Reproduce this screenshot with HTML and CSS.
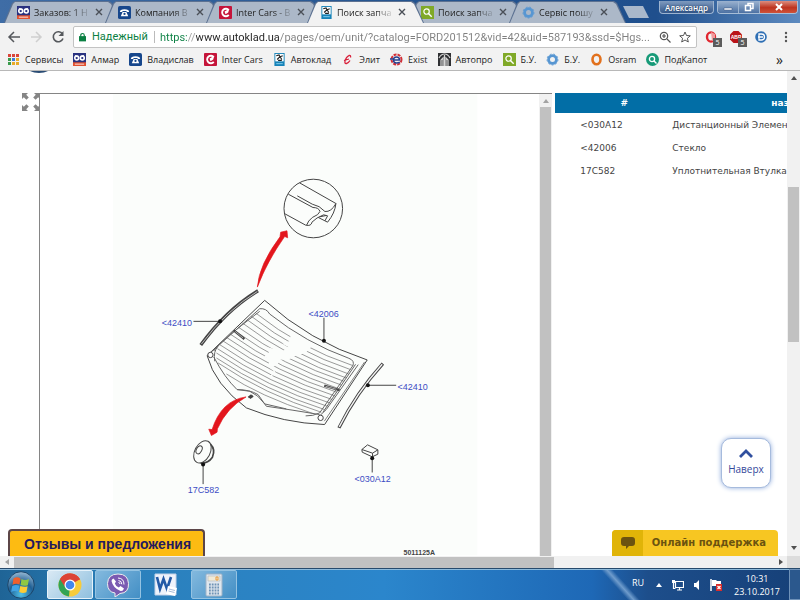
FILE: index.html
```html
<!DOCTYPE html>
<html lang="ru">
<head>
<meta charset="utf-8">
<title>Поиск запчастей</title>
<link rel="stylesheet" href="styles.css">
</head>
<body>
<svg class="defs" aria-hidden="true">
  <symbol id="i-oo" viewBox="0 0 14 14"><path fill="#29317f" d="M0 0h14v14H0z"/><path fill="#e2512f" d="M0 10h14v4H0z"/><g fill="none" stroke="#fff" stroke-width="1.7"><circle cx="4" cy="5.5" r="2.1"/><circle cx="10" cy="5.5" r="2.1"/></g><path stroke="#fff" d="M2 2.5l4 1M12 2.500l-4 1M2 12h10" stroke-width=".9"/></symbol>
  <symbol id="i-phone" viewBox="0 0 14 14"><rect width="14" height="14" rx="2" fill="#17478c"/><path d="M2 6.500q0-3 5-3t5 3H9.500L9 5.500H5L4.500 6.500z" fill="#fff"/><path d="M5 6.500h4l2 4.500H3z" fill="#fff"/><circle cx="7" cy="8.600" r="1.200" fill="#17478c"/></symbol>
  <symbol id="i-ic" viewBox="0 0 14 14"><rect width="14" height="14" rx="1" fill="#c5143a"/><path d="M10.500 4.500A4 4 0 1 0 10.500 9.500" fill="none" stroke="#fff" stroke-width="2"/><path d="M6 6l5-3-1 4-3 2z" fill="#fff"/></symbol>
  <symbol id="i-ak" viewBox="0 0 11 14"><path fill="#1683b8" d="M0 0h11v14H0z"/><path fill="#fff" d="M1 1h9v8H1z"/><path d="M2 3l3-1 1 2 3-1M3 7l3-3 2 3M4 8h4" stroke="#222" stroke-width="1.200" fill="none"/><path d="M2 11.500h7" stroke="#8cd0ee"/></symbol>
  <symbol id="i-search" viewBox="0 0 14 14"><path fill="#80a928" d="M0 0h14v14H0z"/><circle cx="6" cy="6" r="2.900" fill="none" stroke="#fff" stroke-width="1.300"/><path d="M8 8l3.500 3.500" stroke="#fff" stroke-width="1.500"/></symbol>
  <symbol id="i-gear" viewBox="0 0 14 14"><circle cx="7" cy="7" r="4.200" fill="none" stroke="#5796d2" stroke-width="3"/><circle cx="7" cy="7" r="5.900" fill="none" stroke="#5796d2" stroke-width="1" stroke-dasharray="2 2"/></symbol>
  <symbol id="i-x" viewBox="0 0 8 8"><path d="M1 1l6 6M7 1L1 7" stroke="#4a4f57" stroke-width="1.400"/></symbol>
</svg>

<header class="chrome">
  <div class="tabstrip">
    <nav class="tabs" aria-label="Вкладки">
      <div class="tab"><svg class="fav"><use href="#i-oo"/></svg><a href="#">Заказов: 1 Н</a><button aria-label="Закрыть"><svg><use href="#i-x"/></svg></button></div>
      <div class="tab"><svg class="fav"><use href="#i-phone"/></svg><a href="#">Компания В</a><button aria-label="Закрыть"><svg><use href="#i-x"/></svg></button></div>
      <div class="tab"><svg class="fav"><use href="#i-ic"/></svg><a href="#">Inter Cars - В</a><button aria-label="Закрыть"><svg><use href="#i-x"/></svg></button></div>
      <div class="tab active"><svg class="fav"><use href="#i-ak"/></svg><a href="#">Поиск запча</a><button aria-label="Закрыть"><svg><use href="#i-x"/></svg></button></div>
      <div class="tab"><svg class="fav"><use href="#i-search"/></svg><a href="#">Поиск запча</a><button aria-label="Закрыть"><svg><use href="#i-x"/></svg></button></div>
      <div class="tab"><svg class="fav"><use href="#i-gear"/></svg><a href="#">Сервіс пошу</a><button aria-label="Закрыть"><svg><use href="#i-x"/></svg></button></div>
    </nav>
    <button class="newtab" aria-label="Новая вкладка"></button>
    <div class="wincontrols">
      <button class="user">Александр</button>
      <div class="wingroup">
        <button aria-label="Свернуть"><svg viewBox="0 0 20 12"><path d="M6 7h8v2H6z" fill="#fff" stroke="#35527c" stroke-width=".5"/></svg></button>
        <button aria-label="Развернуть"><svg viewBox="0 0 20 12"><path d="M9 4V2.500h5v5h-2M6.500 4.500h5v5h-5z" fill="none" stroke="#fff" stroke-width="1.500"/></svg></button>
        <button class="close" aria-label="Закрыть окно"><svg viewBox="0 0 20 12"><path d="M7 3l6 6M13 3L7 9" stroke="#fff" stroke-width="2"/></svg></button>
      </div>
    </div>
  </div>

  <div class="toolbar">
    <button aria-label="Назад"><svg viewBox="0 0 14 14"><path d="M13 7H2M7 2L2 7l5 5" fill="none" stroke="#55585c" stroke-width="1.500"/></svg></button>
    <button aria-label="Вперёд"><svg viewBox="0 0 14 14"><path d="M2 7h10M7 2l5 5-5 5" fill="none" stroke="#cfcfcf" stroke-width="1.500"/></svg></button>
    <button aria-label="Обновить"><svg viewBox="0 0 14 14"><path d="M11.500 4A5 5 0 1 0 12 8.500" fill="none" stroke="#55585c" stroke-width="1.600"/><path d="M12.500 1v5h-5z" fill="#55585c"/></svg></button>
    <div class="omnibox">
      <svg class="lock" viewBox="0 0 8 10"><path d="M0 4h8v6H0z" fill="#0b8043"/><path d="M2 5V3a2 2 0 0 1 4 0v2" fill="none" stroke="#0b8043" stroke-width="1.300"/></svg>
      <span class="secure">Надежный</span>
      <input class="url" type="text" aria-label="Адрес" value="https://www.autoklad.ua/pages/oem/unit/?catalog=FORD201512&amp;vid=42&amp;uid=587193&amp;ssd=$Hgs...">
      <svg class="obi" viewBox="0 0 12 12"><circle cx="5" cy="5" r="3.700" fill="none" stroke="#555" stroke-width="1.200"/><path d="M8 8l3.500 3.500M3 5h4M5 3v4" stroke="#555" stroke-width="1.200"/></svg>
      <svg class="obi" viewBox="0 0 12 12"><path d="M6 1l1.500 3.500 3.800.3-2.900 2.500.9 3.700L6 9l-3.300 2 .9-3.700L.7 4.800l3.800-.3z" fill="none" stroke="#555"/></svg>
    </div>
    <div class="extensions">
      <button class="ext" aria-label="Opera"><svg viewBox="0 0 12 12"><ellipse cx="6" cy="6" rx="4" ry="4.600" fill="none" stroke="#e0262f" stroke-width="2.400"/><path d="M6 1l4 2v6l-3 1z" fill="#f19a9c"/></svg><span class="badge">5</span></button>
      <button class="ext" aria-label="AdBlock"><svg viewBox="0 0 12 12"><path d="M3.500 0h5L12 3.500v5L8.500 12h-5L0 8.500v-5z" fill="#ba1419"/><text x="6" y="8" text-anchor="middle" class="abp">ABP</text></svg><span class="badge">5</span></button>
      <button class="ext" aria-label="Перевод"><svg viewBox="0 0 12 12"><circle cx="6" cy="6" r="5.800" fill="#2f6fb4"/><path d="M4 3h2.500a3 3 0 0 1 0 6H4zM3 6h5" fill="none" stroke="#fff" stroke-width="1.300"/></svg></button>
      <button class="ext" aria-label="Меню"><svg viewBox="0 0 12 12"><g fill="#555"><circle cx="6" cy="2" r="1.200"/><circle cx="6" cy="6" r="1.200"/><circle cx="6" cy="10" r="1.200"/></g></svg></button>
    </div>
  </div>

  <nav class="bookmarks" aria-label="Закладки">
    <a href="#"><svg viewBox="0 0 13 13"><g><path fill="#d9453a" d="M1 1h3v3H1zM5 1h3v3H5zM9 1h3v3H9z"/><path fill="#3a9b4c" d="M1 5h3v3H1z"/><path fill="#3c7bd6" d="M5 5h3v3H5z"/><path fill="#e7ab28" d="M9 5h3v3H9zM5 9h3v3H5zM9 9h3v3H9z"/><path fill="#3a9b4c" d="M1 9h3v3H1z"/><path d="M4.500 1v11M8.500 1v11M1 4.500h11M1 8.500h11" stroke="#f2f2f2"/></g></svg>Сервисы</a>
    <a href="#"><svg><use href="#i-oo"/></svg>Алмар</a>
    <a href="#"><svg><use href="#i-phone"/></svg>Владислав</a>
    <a href="#"><svg><use href="#i-ic"/></svg>Inter Cars</a>
    <a href="#"><svg><use href="#i-ak"/></svg>Автоклад</a>
    <a href="#"><svg viewBox="0 0 13 13"><path d="M9.500 4.500Q10 2 8 2.500 5 4 4 8q-.5 3 1.500 2.500Q7.500 10 9 7.500M3 7.500l5-1.500" fill="none" stroke="#d8203a" stroke-width="1.300"/></svg>Элит</a>
    <a href="#"><svg viewBox="0 0 13 13"><circle cx="6.500" cy="6.500" r="5" fill="none" stroke="#d32f36" stroke-width="2" stroke-dasharray="3 1"/><path d="M4 7h5.500q0-3-3-3t-3 3 3 3 3-1.200M0 6h4" fill="none" stroke="#27408f" stroke-width="1.500"/></svg>Exist</a>
    <a href="#"><svg viewBox="0 0 13 13"><path fill="#2f3033" d="M0 0h13v13H0z"/><path d="M1 5q2-4 5.500-4T12 5M3 13V7l2-2v8M10 13V7L8 5v8M6.500 2v11" fill="none" stroke="#d5d5d5" stroke-width="1.200"/></svg>Автопро</a>
    <a href="#"><svg><use href="#i-search"/></svg>Б.У.</a>
    <a href="#"><svg><use href="#i-gear"/></svg>Б.У.</a>
    <a href="#"><svg viewBox="0 0 13 13"><ellipse cx="6.500" cy="6.500" rx="4" ry="4.700" fill="none" stroke="#e2711d" stroke-width="2.600"/></svg>Osram</a>
    <a href="#"><svg viewBox="0 0 13 13"><circle cx="6.500" cy="6.500" r="6.500" fill="#179a78"/><circle cx="6" cy="6" r="2.600" fill="none" stroke="#fff" stroke-width="1.300"/><path d="M8 8l2.500 2.500" stroke="#fff" stroke-width="1.400"/></svg>ПодКапот</a>
    <button class="more" aria-label="Другие закладки">»</button>
  </nav>
</header>

<div class="window">
  <main class="page">
    <div class="sitehead"><span class="logo"></span></div>
    <div class="content">
      <button class="expand" aria-label="Развернуть схему"><svg viewBox="0 0 18 18"><g fill="#858585"><path id="ar" d="M0 0h6L4.200 1.800 6.800 4.400 4.400 6.800 1.800 4.200 0 6z"/><use href="#ar" transform="matrix(-1 0 0 1 18 0)"/><use href="#ar" transform="matrix(1 0 0 -1 0 18)"/><use href="#ar" transform="matrix(-1 0 0 -1 18 18)"/></g></svg></button>
      <section class="scheme">
        <svg class="drawing" viewBox="40 94 500 462" preserveAspectRatio="xMinYMin meet" role="img" aria-label="Схема: заднее стекло">
          <path d="M113 94h365v462H113z" fill="#fbfdfb"/>
          <g transform="translate(180 165) scale(.33333)" fill="none" stroke="#444" stroke-width="3">
            <circle cx="401" cy="131" r="88"/>
            <path d="M360 54L469 116Q466 145 444 172L416 158M326 88L400 128Q418 128 421 140 418 150 398 158 385 168 381 181M314 146L378 181Q395 185 397 172 410 158 432 150M353 93L398 118Q420 122 436 140 455 142 469 116M432 150L444 153 436 168M420 156L440 152"/>
            <path d="M233 367Q238 300 301 216L303 202 322 198 324 219 315 215Q262 290 233 367z" fill="#e3161d" stroke="#e3161d" stroke-width="2"/>
          </g>
          <g transform="translate(150 280) scale(.33333)" fill="none" stroke="#444" stroke-width="3">
            <path d="M153 196Q230 90 325 33" stroke-width="10"/>
            <path d="M155 193Q231 91 323 35" stroke="#bbb" stroke-width="3"/>
            <path d="M568 445Q620 340 700 252" stroke-width="10"/>
            <path d="M569 442Q621 340 698 254" stroke="#f4f4f4" stroke-width="4"/>
            <path d="M345 62Q480 185 653 241L525 435Q400 430 290 385Q195 315 172 228z" stroke-width="3"/>
            <path d="M645 247L524 425" stroke-width="2"/>
            <path d="M176 225L330 87Q350 85 360 103Q470 190 598 236Q616 243 610 258L510 400Q490 410 468 409M192 214Q205 190 330 95M195 245Q190 215 205 200M192 232Q225 295 262 330 300 330 325 345L350 380 430 392 510 405M626 255L530 390 512 407M618 254L520 398M262 330L300 335Q325 345 345 373L410 388" stroke="#666"/>
            <g stroke="#666" stroke-width="2">
              <path d="M318 100Q450 205 610 258M305 110Q440 216 603 270M292 120Q430 227 597 283M278 130Q420 238 590 295M265 142Q410 248 583 305M253 152Q401 259 577 317M241 163Q391 270 570 328M230 173Q382 280 562 338M220 184Q374 291 556 349M210 195Q365 302 548 360M203 207Q357 312 540 370M200 220Q352 323 533 380M200 235Q348 334 525 390M205 250Q346 345 515 398M230 283Q330 350 490 402"/>
            </g>
            <path d="M424 160L490 196 468 220 438 228 420 238 392 240 385 252 370 262 378 280 358 296 372 274 352 258 362 245 344 230 358 218 350 202 400 214 416 202 398 192 420 184z" fill="#fbfdfb" stroke="none"/>
            <path d="M252 152L284 178M524 318L570 332" stroke-width="7"/>
            <path d="M256 155L280 175M528 320L560 329" stroke="#ddd" stroke-width="2"/>
            <circle cx="182" cy="226" r="8" fill="#fff"/><circle cx="513" cy="415" r="8" fill="#fff"/>
            <path d="M296 354L306 346M300 356L310 349" stroke-width="6"/>
            <path d="M131 125H210M523 114V182M655 317H740"/>
            <g fill="#111" stroke="none"><circle cx="211" cy="125" r="6"/><circle cx="523" cy="183" r="6"/><circle cx="655" cy="317" r="6"/></g>
            <path d="M289 352Q230 385 203 448L202 458 185 468 177 449 187 450Q215 362 289 352z" fill="#e3161d" stroke="#e3161d" stroke-width="2"/>
          </g>
          <g transform="translate(180 390) scale(.33333)" fill="none" stroke="#444" stroke-width="3">
            <path d="M92 164Q108 180 98 203 85 222 62 221" stroke-width="5"/>
            <ellipse cx="68" cy="187" rx="23" ry="36" transform="rotate(28 68 187)" fill="#fbfdfb"/>
            <ellipse cx="58" cy="181" rx="8" ry="13" transform="rotate(28 58 181)"/>
            <path d="M547 180L564 166 595 181V194L578 202 548 188zM547 180L579 191 595 181M579 191V202M70 222V284M578 202V249"/>
            <g fill="#111" stroke="none"><circle cx="70" cy="225" r="6"/><circle cx="578" cy="206" r="6"/></g>
          </g>
          <g class="labels">
            <text x="162" y="326">&lt;42410</text>
            <text x="309" y="317">&lt;42006</text>
            <text x="398" y="390">&lt;42410</text>
            <text x="188" y="494">17C582</text>
            <text x="355" y="483">&lt;030A12</text>
          </g>
          <text class="docno" x="404" y="556">5011125A</text>
        </svg>
        <div class="vscroll inner"><span class="arrow up"></span><span class="thumb"></span></div>
      </section>
      <section class="parts">
        <table>
          <thead><tr><th scope="col">#</th><th scope="col">название</th></tr></thead>
          <tbody>
            <tr><td>&lt;030A12</td><td>Дистанционный Элемент</td></tr>
            <tr><td>&lt;42006</td><td>Стекло</td></tr>
            <tr><td>17C582</td><td>Уплотнительная Втулка</td></tr>
          </tbody>
        </table>
      </section>
    </div>
    <button class="feedback">Отзывы и предложения</button>
    <button class="totop"><svg viewBox="0 0 14 10"><path d="M1 8l6-6 6 6" fill="none" stroke="#31509f" stroke-width="2.800"/></svg>Наверх</button>
    <button class="chat"><span class="bubble"><svg viewBox="0 0 14 14"><path d="M3 1h8q3 0 3 3v3q0 3-3 3H8l-3 3v-3H3Q0 10 0 7V4q0-3 3-3z" fill="#6b5310"/></svg></span><span class="chattext">Онлайн поддержка</span></button>
  </main>
  <div class="vscroll outer"><span class="arrow up"></span><span class="thumb"></span><span class="arrow down"></span></div>
  <div class="hscroll"><span class="arrow left"></span><span class="thumb"></span><span class="arrow right"></span></div>
  <div class="corner"></div>
</div>

<footer class="taskbar">
  <button class="start" aria-label="Пуск"><svg viewBox="0 0 28 28"><defs><radialGradient id="orb" cx=".5" cy=".85" r=".9"><stop offset="0" stop-color="#4fc0e8"/><stop offset=".5" stop-color="#1f5f94"/><stop offset="1" stop-color="#a9c6dc"/></radialGradient></defs><circle cx="14" cy="14" r="13.300" fill="url(#orb)" stroke="#1c4569"/><path d="M6.500 7.500q3.500-2.500 7 0l-1 6q-3.500-1.500-7 .3z" fill="#f0602c"/><path d="M14.500 8q3.500 1.800 7.500 0l-1.200 6.200q-3.600 1.300-7.200-.2z" fill="#8fc743"/><path d="M5.200 15q3.500-2 7-.3l-1 6q-3.500-1.500-7 .2z" fill="#41a3e5"/><path d="M13.300 15q3.500 1.500 7.300.2l-1.200 6q-3.600 1.500-7.200-.2z" fill="#fccb35"/></svg></button>
  <button class="task current" aria-label="Chrome"><svg viewBox="0 0 24 24"><circle cx="12" cy="12" r="11.500" fill="#f7cb3a"/><path d="M12 12L2 6.300A11.500 11.500 0 0 1 22 6.300z" fill="#dc4437"/><path d="M12 12H12L11 23.500A11.500 11.500 0 0 1 2 6.300z" fill="#31a454"/><path d="M12 6.500h10.100A11.500 11.500 0 0 0 2 6.300L7 14z" fill="#dc4437"/><circle cx="12" cy="12" r="5.500" fill="#fff"/><circle cx="12" cy="12" r="4.300" fill="#4387ed"/></svg></button>
  <button class="task" aria-label="Viber"><svg viewBox="0 0 24 24"><path d="M12 1q10 0 10.500 9.500T14 20.500L9 24v-4Q1.500 19 1.500 10.500 2 1 12 1z" fill="#7b5bb2" stroke="#eee" stroke-width="1"/><path d="M7.500 5.500l2.500 3-1.200 2q1 3 4 4l1.700-1.500 3.500 2.500q-1 3-3.500 2.500Q7 15 5.500 8q0-2 2-2.500z" fill="#fff"/><path d="M12 5q6 .3 6 6.500M12.500 7.500q3.300.3 3.300 3.800M12.500 9.500q1.500 0 1.500 1.500" fill="none" stroke="#fff"/></svg></button>
  <button class="task plain" aria-label="Word"><svg viewBox="0 0 24 24"><path d="M1 1h21v21H1z" fill="#eef3fb" stroke="#c3d2e8"/><path d="M3 4l3 12 3.500-10L13 16l4-12" fill="none" stroke="#235aa6" stroke-width="2.600"/><path d="M14 13l9 2-2 8-9-2z" fill="#fff"/><path d="M15 16l6 1.500M14.500 18l6 1.500" stroke="#a9bcd9"/></svg></button>
  <button class="task" aria-label="Калькулятор"><svg viewBox="0 0 24 24"><rect x="4" y="1" width="16" height="22" rx="1" fill="#dfe7ee" stroke="#9fb3c6"/><path d="M6 3h12v5H6z" fill="#f1ead5" stroke="#aeb6bd" stroke-width=".6"/><path d="M14 4h2v3h-2z" fill="none" stroke="#e79a3c"/><path d="M7 11.500h10M7 14.500h10M7 17.500h10M7 20.500h10" stroke="#6f93b5" stroke-width="1.800" stroke-dasharray="1.800 1"/></svg></button>
  <div class="tray">
    <span class="lang">RU</span>
    <svg class="tri" viewBox="0 0 8 6"><path d="M1 5l3-4 3 4z" fill="#fff"/></svg>
    <svg viewBox="0 0 12 12"><path d="M3.500 2.500h8v6h-8zM5 11h5M7.500 8.500V11M1.500 3v6.500h2" fill="none" stroke="#fff" stroke-width="1.200"/><path d="M0 1h3v3H0z" fill="#fff"/></svg>
    <svg viewBox="0 0 12 12"><path d="M3 4h2l3-3v10L5 8H3z" fill="#fff"/></svg>
    <svg viewBox="0 0 12 12"><path d="M1 0v12" stroke="#fff" stroke-width="1.500"/><path d="M2 1h4l1 1h4v5H2z" fill="#fff"/><path d="M6 5h6v7H6z" fill="#d92c2c"/><path d="M7.500 7l3 3M10.500 7l-3 3" stroke="#fff" stroke-width="1.200"/></svg>
    <time class="clock"><span>10:31</span><span>23.10.2017</span></time>
  </div>
  <button class="peek" aria-label="Показать рабочий стол"></button>
</footer>
</body>
</html>
```
FILE: styles.css
```css
* { box-sizing: border-box; }

body {
  margin: 0;
  height: 100vh;
  display: flex;
  flex-direction: column;
  overflow: hidden;
  font-family: "Open Sans", "Noto Sans", sans-serif;
  font-size: 9px;
  color: #222;
  background: #fff;
}

button {
  margin: 0;
  padding: 0;
  border: 0;
  background: none;
  font: inherit;
  color: inherit;
}

a { color: inherit; text-decoration: none; }
svg { display: block; }
.defs { position: absolute; width: 0; height: 0; }

/* Tab strip */
.tabstrip {
  display: flex;
  height: 23px;
  padding: 1px 0 0 4px;
  background: linear-gradient(90deg, #3f6da6, #24548f 50%, #1f4f8d 82%, #5d8abf 100%);
}

.tabs { display: flex; }

.tab {
  position: relative;
  z-index: 0;
  display: flex;
  align-items: center;
  width: 117px;
  height: 22px;
  margin-right: -16px;
  padding: 0 18px 0 13px;
}

.tab::before,
.tab::after {
  content: "";
  position: absolute;
  inset: 0;
  z-index: -1;
  background: #5c7191;
  clip-path: polygon(0 100%, 8px 2px, 11px 0, 105px 0, 108px 2px, 100% 100%);
}

.tab::after {
  inset: 1px 1px 0;
  background: #acb8c8;
  clip-path: polygon(0 100%, 8px 2px, 10px 0, 103px 0, 106px 2px, 100% 100%);
}

.tab.active { z-index: 1; }
.tab.active::after { background: #f2f2f2; }

.fav { width: 13px; height: 13px; flex: none; }

.tab a {
  flex: 1;
  min-width: 0;
  margin-left: 4px;
  overflow: hidden;
  white-space: nowrap;
  mask-image: linear-gradient(90deg, #000 65%, transparent);
}

.tab button { margin: 0 0 0 3px; }
.tab button svg { width: 8px; height: 8px; }

.newtab {
  width: 26px;
  height: 12px;
  margin: 5px 0 0 13px;
  background: #a9b8cb;
  clip-path: polygon(0 0, 20px 0, 100% 100%, 6px 100%);
}

.wincontrols {
  display: flex;
  gap: 3px;
  margin-left: auto;
  height: 13px;
  color: #fff;
}

.wincontrols button { display: flex; align-items: center; justify-content: center; }

.user {
  width: 55px;
  border: 1px solid #9db4d0;
  border-top: 0;
  border-radius: 0 0 4px 4px;
  background: linear-gradient(#7f9bbf, #35598c);
  text-shadow: 0 0 2px #10294d;
  font-size: 8px;
  font-weight: 600;
}

.wingroup {
  display: flex;
  margin-right: 2px;
  border: 1px solid #a7bdd6;
  border-top: 0;
  border-radius: 0 0 4px 4px;
  overflow: hidden;
}

.wingroup button {
  width: 21px;
  border-right: 1px solid #9fb6d1;
  background: linear-gradient(#9bb2cf, #4c71a3);
}

.wingroup svg { width: 20px; height: 12px; }
.wingroup .close { width: 37px; border: 0; background: linear-gradient(#dc8e7f, #bd3420 55%, #cf5238); }

/* Toolbar */
.toolbar {
  display: flex;
  align-items: center;
  height: 27px;
  padding: 1px 8px 0 7px;
  gap: 8px;
  background: #f2f2f2;
}

.toolbar > button svg { width: 14px; height: 14px; }

.omnibox {
  flex: 1;
  display: flex;
  align-items: center;
  height: 22px;
  padding: 0 5px;
  border: 1px solid #c3c3c3;
  border-radius: 2px;
  background: #fff;
  font-family: Roboto, "Open Sans", sans-serif;
  font-size: 11px;
}

.lock { width: 7px; height: 10px; margin-right: 6px; }

.secure {
  padding-right: 6px;
  margin-right: 5px;
  border-right: 1px solid #bbb;
  line-height: 12px;
  color: #0b8043;
}

.url {
  flex: 1;
  min-width: 0;
  padding: 0;
  border: 0;
  outline: 0;
  font: inherit;
  color: transparent;
  background: linear-gradient(90deg, #0b8043 27px, #999 27px, #999 36px, #222 36px, #222 119px, #808080 119px);
  background-clip: text;
}

.obi { width: 12px; height: 12px; margin-left: 8px; }

.extensions { display: flex; gap: 13px; }
.ext { position: relative; }
.ext svg { width: 12px; height: 12px; }
.abp { font: bold 5px "Liberation Sans", sans-serif; fill: #fff; }

.badge {
  position: absolute;
  left: 8px;
  top: 7px;
  width: 9px;
  height: 9px;
  background: #5c5c5c;
  color: #fff;
  font-size: 7px;
  line-height: 9px;
}

/* Bookmarks */
.bookmarks {
  display: flex;
  align-items: center;
  height: 21px;
  padding: 0 17px 1px 7px;
  gap: 10px;
  background: #f2f2f2;
  border-bottom: 1px solid #b8b8b8;
  white-space: nowrap;
}

.bookmarks a { display: flex; align-items: center; gap: 5px; }
.bookmarks svg { width: 13px; height: 13px; }
.more { margin-left: auto; font-size: 14px; line-height: 14px; }

/* Browser viewport */
.window {
  flex: 1;
  min-height: 0;
  display: grid;
  grid-template-columns: minmax(0, 1fr) 13px;
  grid-template-rows: minmax(0, 1fr) 12px;
}

.page {
  position: relative;
  display: flex;
  flex-direction: column;
  overflow: hidden;
}

.sitehead { height: 22px; flex: none; overflow: hidden; }

.logo {
  display: block;
  width: 30px;
  height: 20px;
  margin: -18px 0 0 24px;
  border-radius: 50%;
  background: #2a4c74;
}

.content { flex: 1; min-height: 0; display: flex; }

.expand { align-self: flex-start; width: 39px; padding-left: 22px; flex: none; }
.expand svg { width: 18px; height: 18px; }

.scheme {
  flex: 513 1 0;
  min-width: 0;
  display: flex;
  border: 1px solid #858585;
  border-width: 1px 0 0 1px;
}

.drawing { flex: 1; min-width: 0; height: 100%; }
.labels { font: 9px "Liberation Sans", sans-serif; fill: #3c4cc4; }
.docno { font: bold 7px "Liberation Sans", sans-serif; fill: #444; }

/* Parts table */
.parts { flex: 232 1 0; min-width: 0; margin-left: 3px; overflow: hidden; }

table {
  width: 200%;
  table-layout: fixed;
  border-collapse: collapse;
  font: 9px "DejaVu Sans", sans-serif;
  color: #444;
  white-space: nowrap;
}

th { height: 20px; padding: 0; background: #026ea6; color: #fff; font-weight: bold; }
th:first-child { width: 92px; padding-left: 46px; }
th:last-child { padding-left: 124px; text-align: left; }
td { height: 23px; padding: 0 0 0 25px; }

/* Floating buttons */
.feedback {
  position: absolute;
  left: 8px;
  bottom: 0;
  height: 27px;
  padding: 0 12px 0 14px;
  border: 2px solid #5c4648;
  border-bottom: 0;
  border-radius: 4px 4px 0 0;
  background: #fdbb12;
  color: #241a5e;
  font: bold 14px "Liberation Sans", sans-serif;
}

.totop {
  position: absolute;
  right: 16px;
  bottom: 68px;
  width: 50px;
  height: 50px;
  display: flex;
  flex-direction: column;
  align-items: center;
  justify-content: center;
  gap: 2px;
  border: 1px solid #a6bbdd;
  border-radius: 10px;
  background: #fff;
  box-shadow: 0 0 5px #8fabdc;
  color: #34499b;
  font-size: 10px;
  line-height: 16px;
}

.totop svg { width: 14px; height: 10px; }

.chat {
  position: absolute;
  right: 9px;
  bottom: 0;
  display: flex;
  height: 26px;
  border-radius: 4px 4px 0 0;
  overflow: hidden;
  background: #f7c622;
  color: #6b5310;
  font: bold 10px "DejaVu Sans", sans-serif;
  line-height: 26px;
}

.bubble { width: 31px; padding: 6px 0 0 9px; background: #e0b408; }
.bubble svg { width: 14px; height: 14px; }
.chattext { padding: 0 12px 0 9px; }

/* Scroll bars */
.vscroll { width: 13px; display: flex; flex-direction: column; align-items: center; background: #f1f1f1; }
.vscroll .thumb { width: 11px; background: #c1c1c1; }
.inner .thumb { flex: 1; margin-top: 4px; }
.outer .thumb { height: 32%; margin-top: 107px; }
.outer .down { margin: auto 0 6px; }

.hscroll { display: flex; align-items: center; padding-right: 4px; background: #f1f1f1; }
.hscroll .thumb { width: 69%; height: 11px; margin-left: 5px; background: #c1c1c1; }
.hscroll .right { margin-left: auto; }
.corner { background: #dcdcdc; }

.arrow { width: 0; height: 0; flex: none; border: 3px solid transparent; }
.up { border-top: 0; border-bottom: 4px solid #505050; margin-top: 5px; }
.inner .up { border-bottom-color: #a3a3a3; }
.down { border-bottom: 0; border-top: 4px solid #505050; }
.left { border-left: 0; border-right: 4px solid #a3a3a3; margin-left: 5px; }
.right { border-right: 0; border-left: 4px solid #505050; }

/* Taskbar */
.taskbar {
  flex: none;
  display: flex;
  height: 32px;
  padding-left: 7px;
  border-top: 1px solid #274a6c;
  box-shadow: inset 0 1px #8dbbdc;
  background:
    linear-gradient(48deg, transparent 43%, #6f9ccc 50%, transparent 57%) 590px 0 / 60px 100% no-repeat,
    linear-gradient(90deg, #1f6496, #2b80bb 15%, #2b86cc 48%, #1e68b6 74%, #1d4e8b 81%, #164078);
}

.start { width: 28px; margin: 1px 12px 0 0; }
.start svg { width: 28px; height: 28px; }

.task {
  width: 46px;
  margin: 1px 2px 1px 0;
  display: flex;
  align-items: center;
  justify-content: center;
  border: 1px solid #94c3e2;
  border-radius: 2px;
  background: linear-gradient(135deg, #83b9de, #438fc5);
}

.task svg { width: 24px; height: 24px; }
.task.current { background: linear-gradient(135deg, #d9e9f4, #8fc0df); border-color: #e5f2fa; }
.task.plain { border-color: transparent; background: none; }

.tray {
  margin-left: auto;
  display: flex;
  align-items: center;
  gap: 7px;
  color: #fff;
}

.tray svg { width: 12px; height: 12px; }
.tray .tri { width: 8px; height: 6px; margin: 0 2px 0 4px; }
.lang { margin-bottom: 4px; }

.clock {
  display: flex;
  flex-direction: column;
  align-items: center;
  margin: 0 9px 0 5px;
  line-height: 13px;
}

.peek { width: 11px; border: 1px solid #6f92b9; border-right: 0; background: #2b588d; }
```
